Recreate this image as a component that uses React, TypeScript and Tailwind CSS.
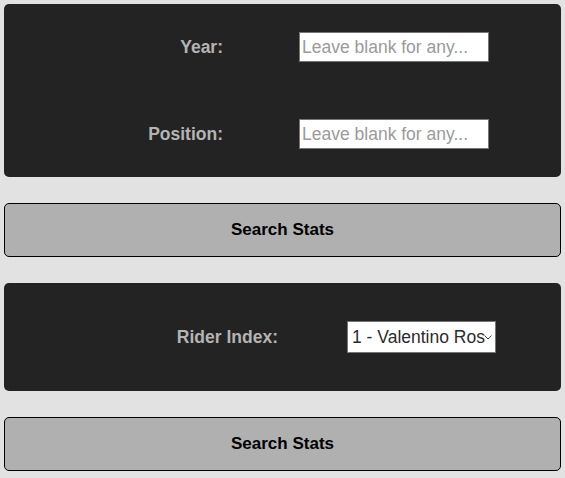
import React from "react";

const font = { fontFamily: '"Liberation Sans", Arial, sans-serif' };

export default function App() {
  return (
    <div className="min-h-[478px] w-[565px] bg-[#e2e2e2] px-[4px] pt-[4px] pb-[8px] flex flex-col gap-[26px]" style={font}>
      <div className="rounded-[5px] bg-[#232323] pt-[28px] pb-[28px] flex flex-col gap-[57px]">
        <div className="flex items-center">
          <div className="w-[219px] shrink-0 text-right text-[17.5px] font-bold text-[#b4b4b4]">Year:</div>
          <input
            className="ml-[76px] h-[30px] w-[190px] border border-[#767676] bg-white px-[2px] text-[17.5px] text-black placeholder:text-[#9a9a9a] outline-none"
            placeholder="Leave blank for any..."
            style={font}
          />
        </div>
        <div className="flex items-center">
          <div className="w-[219px] shrink-0 text-right text-[17.5px] font-bold text-[#b4b4b4]">Position:</div>
          <input
            className="ml-[76px] h-[30px] w-[190px] border border-[#767676] bg-white px-[2px] text-[17.5px] text-black placeholder:text-[#9a9a9a] outline-none"
            placeholder="Leave blank for any..."
            style={font}
          />
        </div>
      </div>
      <button className="h-[54px] rounded-[5px] border border-black bg-[#b0b0b0] text-[17px] font-bold text-black" style={font}>
        Search Stats
      </button>
      <div className="rounded-[5px] bg-[#232323] py-[38px] flex items-center">
        <div className="w-[274px] shrink-0 text-right text-[17.5px] font-bold text-[#b4b4b4]">Rider Index:</div>
        <div className="relative ml-[69px] h-[32px] w-[149px] border border-[#767676] bg-white">
          <div className="h-full w-[137px] overflow-hidden whitespace-nowrap pl-[4px] text-[17.5px] leading-[30px] text-[#2b2b2b]">
            1 - Valentino Rossi
          </div>
          <svg className="absolute right-[3px] top-[13px]" width="8" height="5" viewBox="0 0 8 5">
            <path d="M0.5 0.5 L4 4 L7.5 0.5" fill="none" stroke="#444" strokeWidth="1" />
          </svg>
        </div>
      </div>
      <button className="h-[54px] rounded-[5px] border border-black bg-[#b0b0b0] text-[17px] font-bold text-black" style={font}>
        Search Stats
      </button>
    </div>
  );
}
